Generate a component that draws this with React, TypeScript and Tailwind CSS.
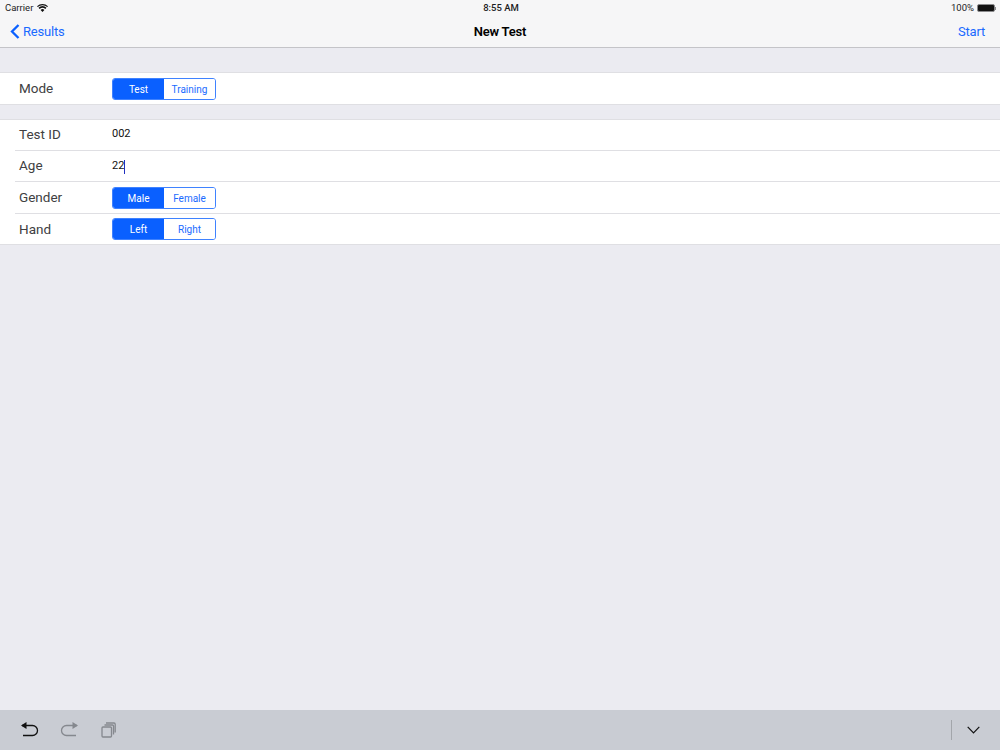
const font = { fontFamily: "Roboto, Inter, 'Liberation Sans', sans-serif" };

function Seg({ a, b }: { a: string; b: string }) {
  return (
    <div className="flex h-[22px] w-[104px] rounded-[3px] border border-[#3f82ff] text-[10px] leading-[22px] text-center overflow-hidden">
      <div className="w-[51px] bg-[#0a60ff] text-white">{a}</div>
      <div className="flex-1 bg-white text-[#1a6aff]">{b}</div>
    </div>
  );
}

function Row({ label, h, pad, last, children }: { label: string; h: string; pad: string; last?: boolean; children: React.ReactNode }) {
  return (
    <div className={`bg-white ${h} pl-[19px] flex items-center relative`}>
      <div className={`w-[93px] text-[13.5px] text-[#404042] ${pad}`}>{label}</div>
      {children}
      {!last && <div className="absolute left-[15px] right-0 bottom-0 h-px bg-[#dfdfe3]" />}
    </div>
  );
}

export default function App() {
  return (
    <div style={font} className="w-[1000px] h-[750px] flex flex-col bg-[#ebebf1] overflow-hidden">
      <div className="h-[48px] bg-[#f6f6f7] border-b border-[#c4c4c8] relative shrink-0">
        <div className="h-[15px] pt-px flex items-center justify-between pl-[5px] pr-[4px] text-[9.5px] text-[#1c1c1e]">
          <div className="flex items-center gap-[4px]">
            <span>Carrier</span>
            <svg width="11" height="8" viewBox="0 0 11 8"><path d="M5.5 8 L3.6 5.9 A3 3 0 0 1 7.4 5.9 Z M2.7 5 L1.5 3.7 A5.8 5.8 0 0 1 9.5 3.7 L8.3 5 A4 4 0 0 0 2.7 5 Z M.8 3 L0 2.2 A8 8 0 0 1 11 2.2 L10.2 3 A7 7 0 0 0 .8 3 Z" fill="#111" /></svg>
          </div>
          <div className="absolute left-[2px] right-0 top-[2px] text-center font-medium leading-[12px]">8:55 AM</div>
          <div className="flex items-center gap-[3px]">
            <span>100%</span>
            <div className="flex items-center">
              <div className="w-[18px] h-[8px] rounded-[2px] bg-[#111] border border-[#8a8a8c]" />
              <div className="w-px h-[3px] bg-[#8a8a8c]" />
            </div>
          </div>
        </div>
        <div className="h-[32px] pt-px flex items-center justify-between pl-[10px] pr-[15px] text-[#1a6aff] text-[13px] tracking-[-0.2px] relative">
          <div className="flex items-center gap-[3px]">
            <svg width="10" height="15" viewBox="0 0 10 15" fill="none"><path d="M8.5 1 L2 7.5 L8.5 14" stroke="#0a60ff" strokeWidth="2.3" /></svg>
            <span>Results</span>
          </div>
          <div className="absolute left-0 right-0 text-center text-black font-semibold text-[13px]">New Test</div>
          <span className="relative">Start</span>
        </div>
      </div>

      <div className="h-[24px] shrink-0" />
      <div className="border-y border-[#dfdfe3] shrink-0">
        <Row label="Mode" pad="pb-0" h="h-[31px]" last><Seg a="Test" b="Training" /></Row>
      </div>
      <div className="h-[14px] shrink-0" />
      <div className="border-y border-[#dfdfe3] shrink-0">
        <Row label="Test ID" pad="pb-[2px]" h="h-[31px]"><span className="text-[11px] text-[#111] pb-[2px]">002</span></Row>
        <Row label="Age" pad="pb-[2px]" h="h-[31px]">
          <span className="text-[11px] text-[#111]">22</span>
          <span className="w-px h-[14px] bg-[#2030c0]" />
        </Row>
        <Row label="Gender" pad="pb-[2px]" h="h-[32px]"><Seg a="Male" b="Female" /></Row>
        <Row label="Hand" pad="pb-0" h="h-[30px]" last><Seg a="Left" b="Right" /></Row>
      </div>

      <div className="flex-1" />

      <div className="h-[40px] shrink-0 bg-[#c9ccd3] flex items-center pl-[21px] pr-[20px]">
        <svg width="18" height="16" viewBox="0 0 18 16" fill="none">
          <path d="M1 3.5 H11.5 A4.5 4.5 0 0 1 11.5 13.5 H2" stroke="#111" strokeWidth="1.3" />
          <path d="M0 3.5 L5.5 0 V7 Z" fill="#111" />
        </svg>
        <svg className="ml-[21px]" width="18" height="16" viewBox="0 0 18 16" fill="none">
          <path d="M17 3.5 H6.5 A4.5 4.5 0 0 0 6.5 13.5 H16" stroke="#85888e" strokeWidth="1.3" />
          <path d="M18 3.5 L12.5 0 V7 Z" fill="#85888e" />
        </svg>
        <svg className="ml-[23px]" width="15" height="16" viewBox="0 0 15 16" fill="none" stroke="#85888e" strokeWidth="1.3">
          <rect x="1" y="5" width="9.5" height="10" rx="1" />
          <path d="M3.5 3 H11.5 A1 1 0 0 1 12.5 4 V12.5 M5 1 H13 A1.2 1.2 0 0 1 14.2 2.2 V10.5" />
        </svg>
        <div className="flex-1" />
        <div className="w-px h-[20px] bg-[#a3a6ab]" />
        <svg className="ml-[15px]" width="13" height="8" viewBox="0 0 13 8" fill="none"><path d="M.7 .8 L6.5 6.8 L12.3 .8" stroke="#111" strokeWidth="1.2" /></svg>
      </div>
    </div>
  );
}
